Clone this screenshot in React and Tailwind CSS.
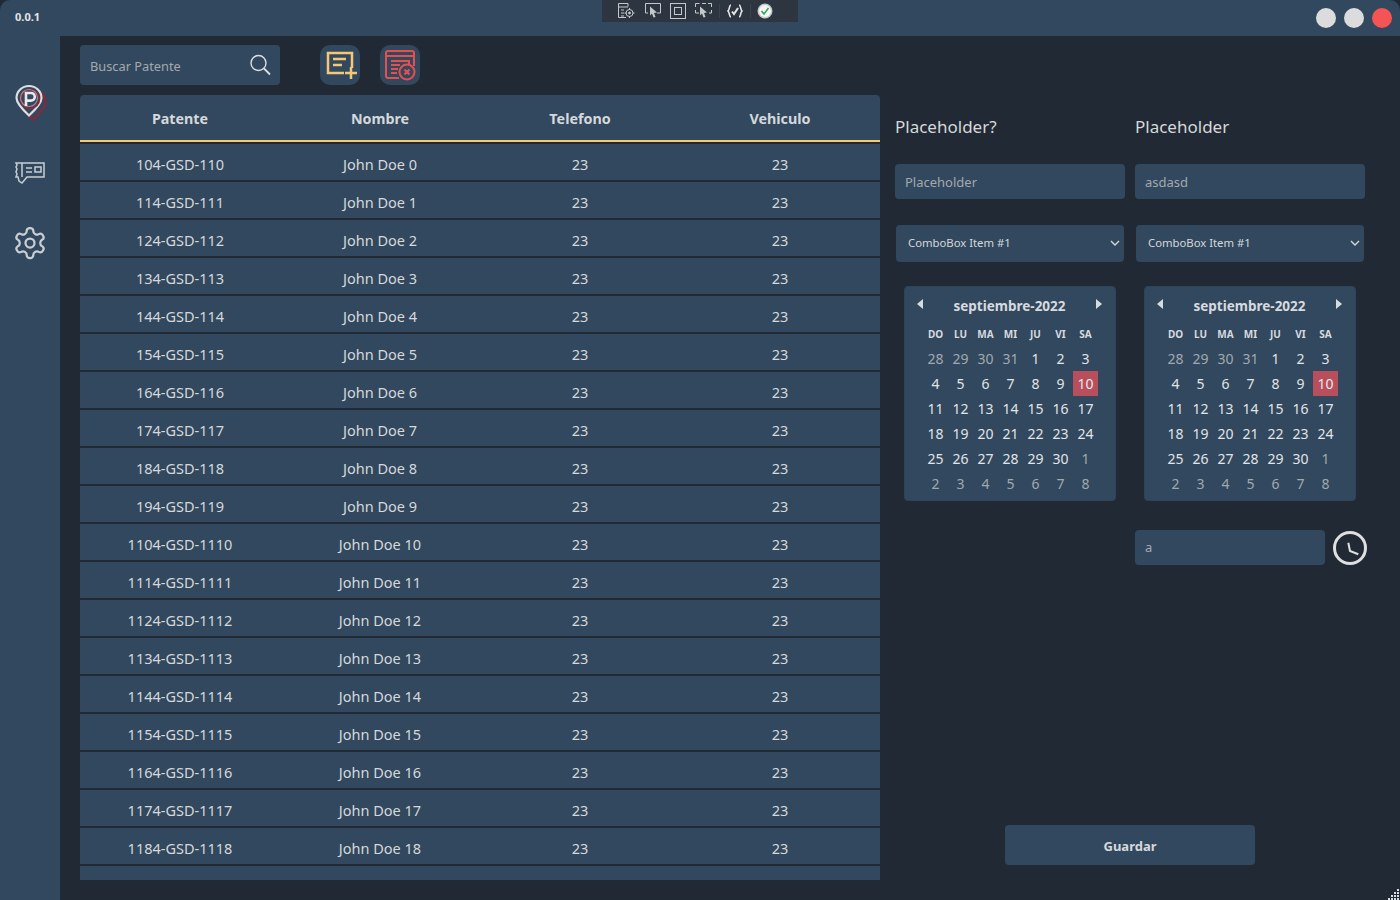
const font = { fontFamily: '"Noto Sans", "Open Sans", sans-serif' };

const rows = Array.from({ length: 19 }, (_, i) => ({
  patente: i === 0 ? "104-GSD-110" : `1${i}4-GSD-11${i}`,
  nombre: `John Doe ${i}`,
}));

const week = ["DO", "LU", "MA", "MI", "JU", "VI", "SA"];
const days = [
  ["28", "29", "30", "31", "1", "2", "3"],
  ["4", "5", "6", "7", "8", "9", "10"],
  ["11", "12", "13", "14", "15", "16", "17"],
  ["18", "19", "20", "21", "22", "23", "24"],
  ["25", "26", "27", "28", "29", "30", "1"],
  ["2", "3", "4", "5", "6", "7", "8"],
];

function isOutside(rowIndex, day) {
  const n = Number(day);
  return (rowIndex === 0 && n > 20) || (rowIndex === 4 && n === 1) || rowIndex === 5;
}

function Calendar() {
  return (
    <div className="ml-[9px] w-[212px] h-[215px] mt-6 rounded bg-[#31485e] border border-[#2e4358] pt-[7px]">
      <div className="flex items-center justify-between h-6 pl-[11px] pr-[12px]">
        <svg className="-mt-[5px]" width="8" height="10" viewBox="0 0 8 10"><path d="M7 0v10L1 5z" fill="#d8dade" /></svg>
        <span className="text-[13.500px] font-bold text-[#d8dade]">septiembre-2022</span>
        <svg className="-mt-[5px]" width="8" height="10" viewBox="0 0 8 10"><path d="M1 0v10l6-5z" fill="#d8dade" /></svg>
      </div>
      <div className="grid grid-cols-[repeat(7,25px)] px-[18px] mt-[5px]">
        {week.map((d) => (
          <span key={d} className="h-[22px] flex items-center justify-center text-[10px] font-bold text-[#d8dade]">{d}</span>
        ))}
      </div>
      <div className="grid grid-cols-[repeat(7,25px)] auto-rows-[25px] px-[18px] mt-px">
        {days.map((row, ri) =>
          row.map((d, ci) => (
            <span
              key={`${ri}-${ci}`}
              className={
                "flex items-center justify-center text-[14px] " +
                (ri === 1 && ci === 6
                  ? "bg-[#b84f5c] text-[#e8e8e8]"
                  : isOutside(ri, d)
                  ? "text-[#a2a8ae]"
                  : "text-[#e2e4e6]")
              }
            >
              {d}
            </span>
          ))
        )}
      </div>
    </div>
  );
}

function FormColumn({ title, value }) {
  return (
    <div className="w-[230px]">
      <div className="h-[69px] pt-[17px] text-[17px] leading-[30px] text-[#d6d8db]">{title}</div>
      <div className="h-[35px] rounded bg-[#31485e] px-[10px] pt-[2px] flex items-center text-[13px] text-[#a4a9ae]">{value}</div>
      <div className="mt-[26px] mx-px h-[37px] rounded bg-[#31485e] pl-3 pr-[4px] flex items-center justify-between text-[11.300px] text-[#d6d8db]">
        <span>ComboBox Item #1</span>
        <svg width="10" height="7" viewBox="0 0 10 7" fill="none" stroke="#d6d8db" strokeWidth="1.400"><path d="M1 1l4 4 4-4" /></svg>
      </div>
      <Calendar />
    </div>
  );
}

function ParkIcon() {
  return (
    <svg width="32" height="38" viewBox="0 0 32 38" fill="none">
      <path d="M16 4c7 0 12.500 5.300 12.500 12 0 5-5 10.500-12.500 17.500C8.500 26.500 3.500 21 3.500 16 3.500 9.300 9 4 16 4z" stroke="#7e2c40" strokeWidth="2.500" transform="translate(2 2)" />
      <path d="M14 2c7 0 12.500 5.300 12.500 12 0 5-5 10.500-12.500 17.500C6.500 24.500 1.500 19 1.500 14 1.500 7.300 7 2 14 2z" fill="#31485e" stroke="#dcdee1" strokeWidth="2.200" />
      <circle cx="15" cy="15" r="9" stroke="#7e2c40" strokeWidth="2.500" />
      <circle cx="14" cy="14" r="8.500" stroke="#dcdee1" strokeWidth="1.200" opacity=".5" />
      <path d="M11 22V9h5a3.800 3.800 0 0 1 0 7.600h-5" stroke="#e8e9eb" strokeWidth="2.600" />
    </svg>
  );
}

function TicketIcon() {
  return (
    <svg width="31" height="24" viewBox="0 0 31 24" fill="none" stroke="#c9ced3" strokeWidth="1.500">
      <path d="M2 1h28v14H13l-5 6-3-2-1-4H2l1-3-1-2 1-3-1-2 1-2z" />
      <path d="M8 1v14" />
      <path d="M12 6h6M12 10h6" />
      <rect x="21" y="5" width="6" height="5" />
    </svg>
  );
}

function GearIcon() {
  return (
    <svg width="36" height="36" viewBox="0 0 24 24" fill="none" stroke="#c9ced3" strokeWidth="1.500" strokeLinejoin="round">
      <path d="M12.220 2h-.440a2 2 0 0 0-2 2v.180a2 2 0 0 1-1 1.730l-.430.250a2 2 0 0 1-2 0l-.150-.080a2 2 0 0 0-2.730.730l-.220.380a2 2 0 0 0 .730 2.730l.150.100a2 2 0 0 1 1 1.720v.510a2 2 0 0 1-1 1.740l-.150.090a2 2 0 0 0-.730 2.730l.220.380a2 2 0 0 0 2.730.730l.150-.080a2 2 0 0 1 2 0l.430.250a2 2 0 0 1 1 1.730V20a2 2 0 0 0 2 2h.440a2 2 0 0 0 2-2v-.180a2 2 0 0 1 1-1.730l.430-.250a2 2 0 0 1 2 0l.150.080a2 2 0 0 0 2.730-.730l.220-.390a2 2 0 0 0-.730-2.730l-.150-.080a2 2 0 0 1-1-1.740v-.500a2 2 0 0 1 1-1.740l.150-.090a2 2 0 0 0 .730-2.730l-.220-.380a2 2 0 0 0-2.730-.730l-.150.080a2 2 0 0 1-2 0l-.430-.250a2 2 0 0 1-1-1.730V4a2 2 0 0 0-2-2z" />
      <circle cx="12" cy="12" r="3" />
    </svg>
  );
}

function DebugStrip() {
  return (
    <div className="w-[196px] h-[22px] bg-[#2d3640] flex items-center pl-4 text-[#c5c8cb]">
      <svg width="18" height="16" viewBox="0 0 18 16" fill="none" stroke="currentColor" strokeWidth="1">
        <path d="M8 14.500H.500V.500H10v3" />
        <path d="M.500 4H10M3 7h3M3 10h3M3 13h3" />
        <circle cx="11.500" cy="10" r="3.500" />
        <circle cx="11.500" cy="10" r="1" fill="currentColor" />
        <path d="M11.500 5v2M11.500 13v2M6.500 10h2M14.500 10h2" />
      </svg>
      <svg className="ml-[9px]" width="17" height="16" viewBox="0 0 17 16" fill="none">
        <path d="M3 10H.500V.500h15V10H12" stroke="currentColor" />
        <path d="M5 3.500l7 6-3 .500 1.500 4-2 .500-1.500-4L5 12.500z" fill="currentColor" />
      </svg>
      <svg className="ml-2" width="17" height="16" viewBox="0 0 17 16" fill="none" stroke="currentColor">
        <rect x=".500" y=".500" width="15" height="15" />
        <rect x="4.500" y="4.500" width="7" height="7" />
      </svg>
      <svg className="ml-2" width="18" height="16" viewBox="0 0 18 16" fill="none">
        <path d="M.500 4V.500h4M7 .500h4M13 .500h3.500V4M16.500 7v3H14M.500 7v3H4" stroke="currentColor" />
        <path d="M5 3.500l7 6-3 .500 1.500 4-2 .500-1.500-4L5 12.500z" fill="currentColor" />
      </svg>
      <span className="ml-[6px] w-px h-[14px] bg-[#3a444e]" />
      <svg className="ml-[7px]" width="16" height="14" viewBox="0 0 16 14" fill="none" stroke="#e4e6e8" strokeWidth="1.600">
        <path d="M4 1C2 1 3 5 1 7c2 2 1 6 3 6M12 1c2 0 1 4 3 6-2 2-1 6-3 6" />
        <path d="M5 7.500L7 10l4-6" strokeWidth="2" />
      </svg>
      <span className="ml-[7px] w-px h-[14px] bg-[#3a444e]" />
      <svg className="ml-[6px]" width="16" height="16" viewBox="0 0 16 16" fill="none">
        <circle cx="8" cy="8" r="7.500" fill="#c5c8cb" />
        <circle cx="8" cy="8" r="6" fill="#f4f6f4" />
        <path d="M4.500 8L7 11l4.500-6" stroke="#2fa84f" strokeWidth="1.500" />
      </svg>
    </div>
  );
}

export default function App() {
  return (
    <div className="relative w-[1400px] h-[900px] overflow-hidden bg-[#212a34] flex flex-col" style={font}>
      {/* Title bar */}
      <div className="h-9 shrink-0 bg-[#31485e] rounded-t-[10px] grid grid-cols-[1fr_auto_1fr]">
        <div className="pl-[15px] pt-[9px] text-[11px] leading-4 font-bold text-[#e2e4e6]">0.0.1</div>
        <DebugStrip />
        <div className="flex items-start justify-end gap-2 pt-2 pr-2">
          <span className="w-5 h-5 rounded-full bg-[#dcdcdc]" />
          <span className="w-5 h-5 rounded-full bg-[#dcdcdc]" />
          <span className="w-5 h-5 rounded-full bg-[#f55454]" />
        </div>
      </div>

      <div className="flex flex-1 min-h-0">
        {/* Sidebar */}
        <div className="w-[60px] shrink-0 bg-[#31485e] flex flex-col items-center pt-[48px]">
          <div className="ml-[1px]"><ParkIcon /></div>
          <div className="mt-[40px] -ml-[1px]"><TicketIcon /></div>
          <div className="mt-[39px]"><GearIcon /></div>
        </div>

        {/* Table side */}
        <div className="w-[820px] shrink-0 pl-5 pt-[9px]">
          <div className="flex items-center h-10">
            <div className="w-[200px] h-10 rounded bg-[#31485e] pl-[10px] pr-[8px] flex items-center justify-between">
              <span className="text-[12.800px] text-[#a4a9ae] pt-1">Buscar Patente</span>
              <svg width="24" height="24" viewBox="0 0 24 24" fill="none" stroke="#dcdfe2" strokeWidth="1.400">
                <circle cx="10.500" cy="10" r="7.500" />
                <path d="M16 15.500l6 6" strokeWidth="1.800" />
              </svg>
            </div>
            <div className="ml-10 w-10 h-10 rounded-[10px] bg-[#31485e] flex items-center justify-center">
              <svg width="34" height="30" viewBox="0 0 34 30" fill="none" stroke="#f7c873" strokeWidth="2.500">
                <path d="M21 23H5V3h24v15" />
                <path d="M10 9h13M10 15h9" />
                <path d="M28 17v12M22 23h12" />
              </svg>
            </div>
            <div className="ml-5 w-10 h-10 rounded-[10px] bg-[#31485e] flex items-center justify-center">
              <svg width="32" height="32" viewBox="0 0 32 32" fill="none" stroke="#e5504f" strokeWidth="2">
                <path d="M15 29H4a2 2 0 0 1-2-2V4a2 2 0 0 1 2-2h24a2 2 0 0 1 2 2v13" />
                <path d="M2 7h28M7 12h18v3M7 16h9M7 20h7M7 24h6" />
                <circle cx="23" cy="23" r="7.500" fill="#31485e" />
                <path d="M20.500 20.500l5 5M25.500 20.500l-5 5" strokeWidth="2.400" />
              </svg>
            </div>
          </div>

          <div className="mt-[10px] w-[800px] h-[785px] overflow-hidden">
            <div className="h-[47px] rounded-t bg-[#31485e] border-b-2 border-[#f7c873] grid grid-cols-4 items-center pt-[2px] text-[14.300px] font-bold text-[#d6d8db]">
              <span className="text-center">Patente</span>
              <span className="text-center">Nombre</span>
              <span className="text-center">Telefono</span>
              <span className="text-center">Vehiculo</span>
            </div>
            <div className="pt-[2px] flex flex-col gap-[2px]">
              {rows.map((row) => (
                <div key={row.nombre} className="h-9 shrink-0 bg-[#31485e] grid grid-cols-4 items-center pt-[6px] text-[14.500px] text-[#d6d8db]">
                  <span className="text-center">{row.patente}</span>
                  <span className="text-center">{row.nombre}</span>
                  <span className="text-center">23</span>
                  <span className="text-center">23</span>
                </div>
              ))}
              <div className="h-9 shrink-0 bg-[#31485e]" />
            </div>
          </div>
        </div>

        {/* Form side */}
        <div className="flex-1 pl-[15px] pt-[59px] pb-[35px] flex flex-col">
          <div className="flex gap-[10px]">
            <FormColumn title="Placeholder?" value="Placeholder" />
            <FormColumn title="Placeholder" value="asdasd" />
          </div>
          <div className="mt-[29px] ml-[240px] flex items-center">
            <div className="w-[190px] h-[35px] rounded bg-[#31485e] px-[10px] flex items-center text-[13px] text-[#a4a9ae]">a</div>
            <svg className="ml-2" width="34" height="34" viewBox="0 0 34 34" fill="none" stroke="#dedfe0">
              <circle cx="17" cy="17" r="15.500" strokeWidth="3" />
              <path d="M15.300 11.700L17 20l8.300 3.300" strokeWidth="2" />
            </svg>
          </div>
          <button className="mt-auto ml-[110px] w-[250px] h-10 rounded bg-[#31485e] pt-1 text-[13px] font-bold text-[#d6d8db]">Guardar</button>
        </div>
      </div>

      {/* Resize grip */}
      <svg className="absolute right-0 bottom-0" width="12" height="12" viewBox="0 0 12 12" fill="#d8dde6">
        <rect x="9" y="1" width="2" height="2" />
        <rect x="6" y="4" width="2" height="2" />
        <rect x="9" y="4" width="2" height="2" />
        <rect x="3" y="7" width="2" height="2" />
        <rect x="6" y="7" width="2" height="2" />
        <rect x="9" y="7" width="2" height="2" />
        <rect x="0" y="10" width="2" height="2" />
        <rect x="3" y="10" width="2" height="2" />
        <rect x="6" y="10" width="2" height="2" />
        <rect x="9" y="10" width="2" height="2" />
      </svg>
    </div>
  );
}
